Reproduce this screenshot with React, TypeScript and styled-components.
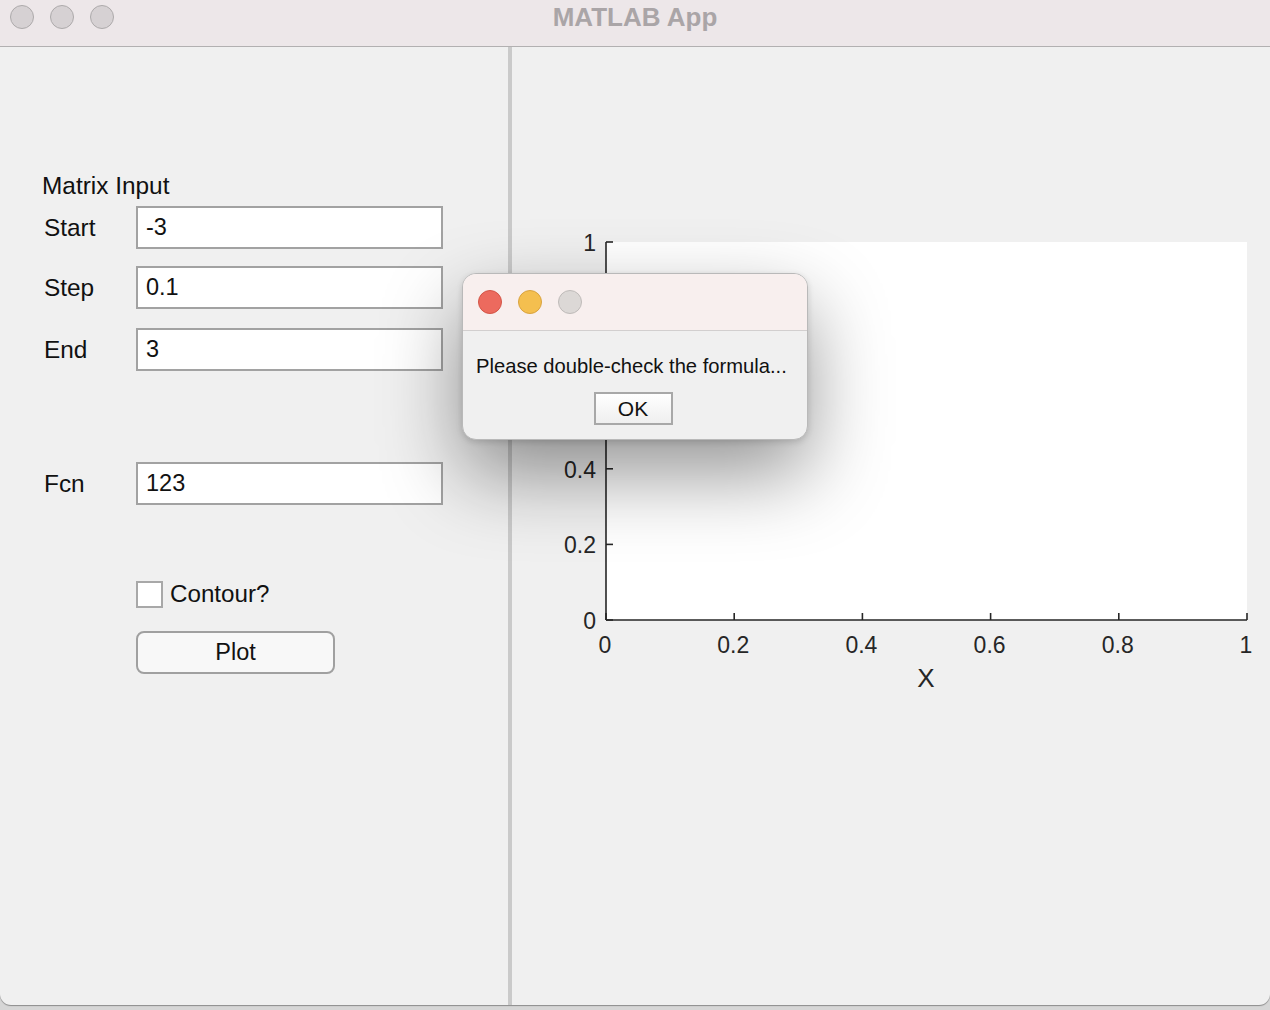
import React from "react";
import styled, { createGlobalStyle } from "styled-components";

const Global = createGlobalStyle`
  html, body { margin: 0; padding: 0; background: #d9d9d9; }
  body { font-family: "Liberation Sans", Arial, sans-serif; }
  * { box-sizing: border-box; }
`;

const Screen = styled.div`
  position: relative;
  width: 1270px;
  height: 1010px;
  overflow: hidden;
  background: #d6d6d6;
`;

const Window = styled.div`
  display: flex;
  flex-direction: column;
  width: 1270px;
  height: 1005px;
  background: #f0f0f0;
  border-radius: 0 0 11px 11px;
  box-shadow: 0 1px 1px rgba(0, 0, 0, 0.35);
  overflow: hidden;
`;

const TitleBar = styled.div`
  position: relative;
  display: flex;
  align-items: flex-start;
  gap: 16px;
  height: 47px;
  padding: 5px 0 0 10px;
  background: #ede7e9;
  border-bottom: 1px solid #b2b0b1;
  flex-shrink: 0;
`;

const Light = styled.span<{ $color: string; $border: string }>`
  display: block;
  width: 24px;
  height: 24px;
  border-radius: 50%;
  background: ${(p) => p.$color};
  border: 1px solid ${(p) => p.$border};
`;

const Title = styled.div`
  position: absolute;
  left: 0;
  right: 0;
  top: 5px;
  text-align: center;
  font-weight: bold;
  font-size: 26px;
  line-height: 24px;
  color: #aaa5a7;
  pointer-events: none;
`;

const Body = styled.div`
  display: flex;
  flex: 1;
`;

const LeftPanel = styled.div`
  width: 508px;
  flex-shrink: 0;
  padding: 125px 0 0 44px;
  display: flex;
  flex-direction: column;
`;

const Divider = styled.div`
  width: 4px;
  background: #cacaca;
  flex-shrink: 0;
`;

const RightPanel = styled.div`
  flex: 1;
`;

const GroupLabel = styled.div`
  margin-left: -2px;
  font-size: 24.4px;
  line-height: 28px;
  color: #111;
`;

const Row = styled.div<{ $top: number }>`
  display: grid;
  grid-template-columns: 92px 307px;
  align-items: center;
  margin-top: ${(p) => p.$top}px;
`;

const Label = styled.div`
  font-size: 24.4px;
  color: #111;
`;

const Field = styled.div`
  height: 43px;
  border: 2px solid #a2a2a2;
  background: #fff;
  padding-left: 8px;
  display: flex;
  align-items: center;
  font-size: 23.5px;
  color: #111;
`;

const CheckRow = styled.div<{ $top: number }>`
  display: flex;
  align-items: center;
  gap: 7px;
  margin: ${(p) => p.$top}px 0 0 92px;
`;

const CheckBox = styled.span`
  width: 27px;
  height: 27px;
  border: 2px solid #a8a8a8;
  background: #fff;
`;

const CheckText = styled.span`
  font-size: 24.2px;
  color: #111;
`;

const PlotButton = styled.div<{ $top: number }>`
  margin: ${(p) => p.$top}px 0 0 92px;
  width: 199px;
  height: 43px;
  border: 2px solid #a0a0a0;
  border-radius: 8px;
  background: #f8f8f8;
  display: flex;
  align-items: center;
  justify-content: center;
  font-size: 23.5px;
  color: #111;
`;

const Dialog = styled.div`
  position: absolute;
  left: 462px;
  top: 273px;
  width: 346px;
  height: 167px;
  border: 1px solid #b9b9b9;
  border-radius: 14px;
  background: #f0f0f0;
  box-shadow: 0 34px 80px rgba(0, 0, 0, 0.42), 0 2px 6px rgba(0, 0, 0, 0.14);
  overflow: hidden;
  display: flex;
  flex-direction: column;
`;

const DialogBar = styled.div`
  height: 57px;
  display: flex;
  align-items: center;
  gap: 16px;
  padding-left: 15px;
  background: #f8efee;
  border-bottom: 1px solid #d2cfcf;
`;

const DialogBody = styled.div`
  display: flex;
  flex-direction: column;
  align-items: center;
  padding-top: 23px;
`;

const Message = styled.div`
  align-self: flex-start;
  padding-left: 13px;
  font-size: 20.2px;
  line-height: 24px;
  color: #111;
`;

const OkButton = styled.div`
  margin-top: 14px;
  margin-left: -4px;
  width: 79px;
  height: 33px;
  border: 2px solid #a8a8a8;
  background: linear-gradient(#ffffff, #efefef);
  display: flex;
  align-items: center;
  justify-content: center;
  font-size: 21px;
  color: #111;
`;

const Chart = styled.svg`
  display: block;
  font-family: "Liberation Sans", Arial, sans-serif;
`;

const AX0 = 94;
const AX1 = 735;
const AY0 = 573;
const AY1 = 195;

function Axes() {
  const xs = [0, 0.2, 0.4, 0.6, 0.8, 1];
  const px = (v: number) => AX0 + (AX1 - AX0) * v;
  const py = (v: number) => AY0 - (AY0 - AY1) * v;
  const fmt = (v: number) => (v === 0 ? "0" : v === 1 ? "1" : v.toFixed(1));
  return (
    <Chart width={758} height={680} viewBox="0 0 758 680">
      <rect x={AX0} y={AY1} width={AX1 - AX0} height={AY0 - AY1} fill="#ffffff" />
      <g stroke="#262626" strokeWidth={1.6} fill="none">
        <line x1={AX0} y1={AY1} x2={AX0} y2={AY0} />
        <line x1={AX0} y1={AY0} x2={AX1} y2={AY0} />
        {xs.map((v) => (
          <line key={"xt" + v} x1={px(v)} y1={AY0} x2={px(v)} y2={AY0 - 7} />
        ))}
        {xs.map((v) => (
          <line key={"yt" + v} x1={AX0} y1={py(v)} x2={AX0 + 7} y2={py(v)} />
        ))}
      </g>
      <g fill="#262626" fontSize={23}>
        {xs.map((v) => (
          <text key={"xl" + v} x={px(v) - 1} y={606} textAnchor="middle">
            {fmt(v)}
          </text>
        ))}
        {xs.map((v) => (
          <text key={"yl" + v} x={84} y={py(v) + 9} textAnchor="end">
            {fmt(v)}
          </text>
        ))}
        <text x={414} y={640} textAnchor="middle" fontSize={26}>
          X
        </text>
      </g>
    </Chart>
  );
}

export default function App() {
  return (
    <>
      <Global />
      <Screen>
        <Window>
          <TitleBar>
            <Light $color="#d6d1d3" $border="#adaaab" />
            <Light $color="#d6d1d3" $border="#adaaab" />
            <Light $color="#d6d1d3" $border="#adaaab" />
            <Title>MATLAB App</Title>
          </TitleBar>
          <Body>
            <LeftPanel>
              <GroupLabel>Matrix Input</GroupLabel>
              <Row $top={6}>
                <Label>Start</Label>
                <Field>-3</Field>
              </Row>
              <Row $top={17}>
                <Label>Step</Label>
                <Field>0.1</Field>
              </Row>
              <Row $top={19}>
                <Label>End</Label>
                <Field>3</Field>
              </Row>
              <Row $top={91}>
                <Label>Fcn</Label>
                <Field>123</Field>
              </Row>
              <CheckRow $top={75}>
                <CheckBox />
                <CheckText>Contour?</CheckText>
              </CheckRow>
              <PlotButton $top={23}>Plot</PlotButton>
            </LeftPanel>
            <Divider />
            <RightPanel>
              <Axes />
            </RightPanel>
          </Body>
        </Window>
        <Dialog>
          <DialogBar>
            <Light $color="#ec6a5e" $border="#d35547" />
            <Light $color="#f4bf4f" $border="#d9a33f" />
            <Light $color="#dcd8d6" $border="#bfbbb9" />
          </DialogBar>
          <DialogBody>
            <Message>Please double-check the formula...</Message>
            <OkButton>OK</OkButton>
          </DialogBody>
        </Dialog>
      </Screen>
    </>
  );
}
